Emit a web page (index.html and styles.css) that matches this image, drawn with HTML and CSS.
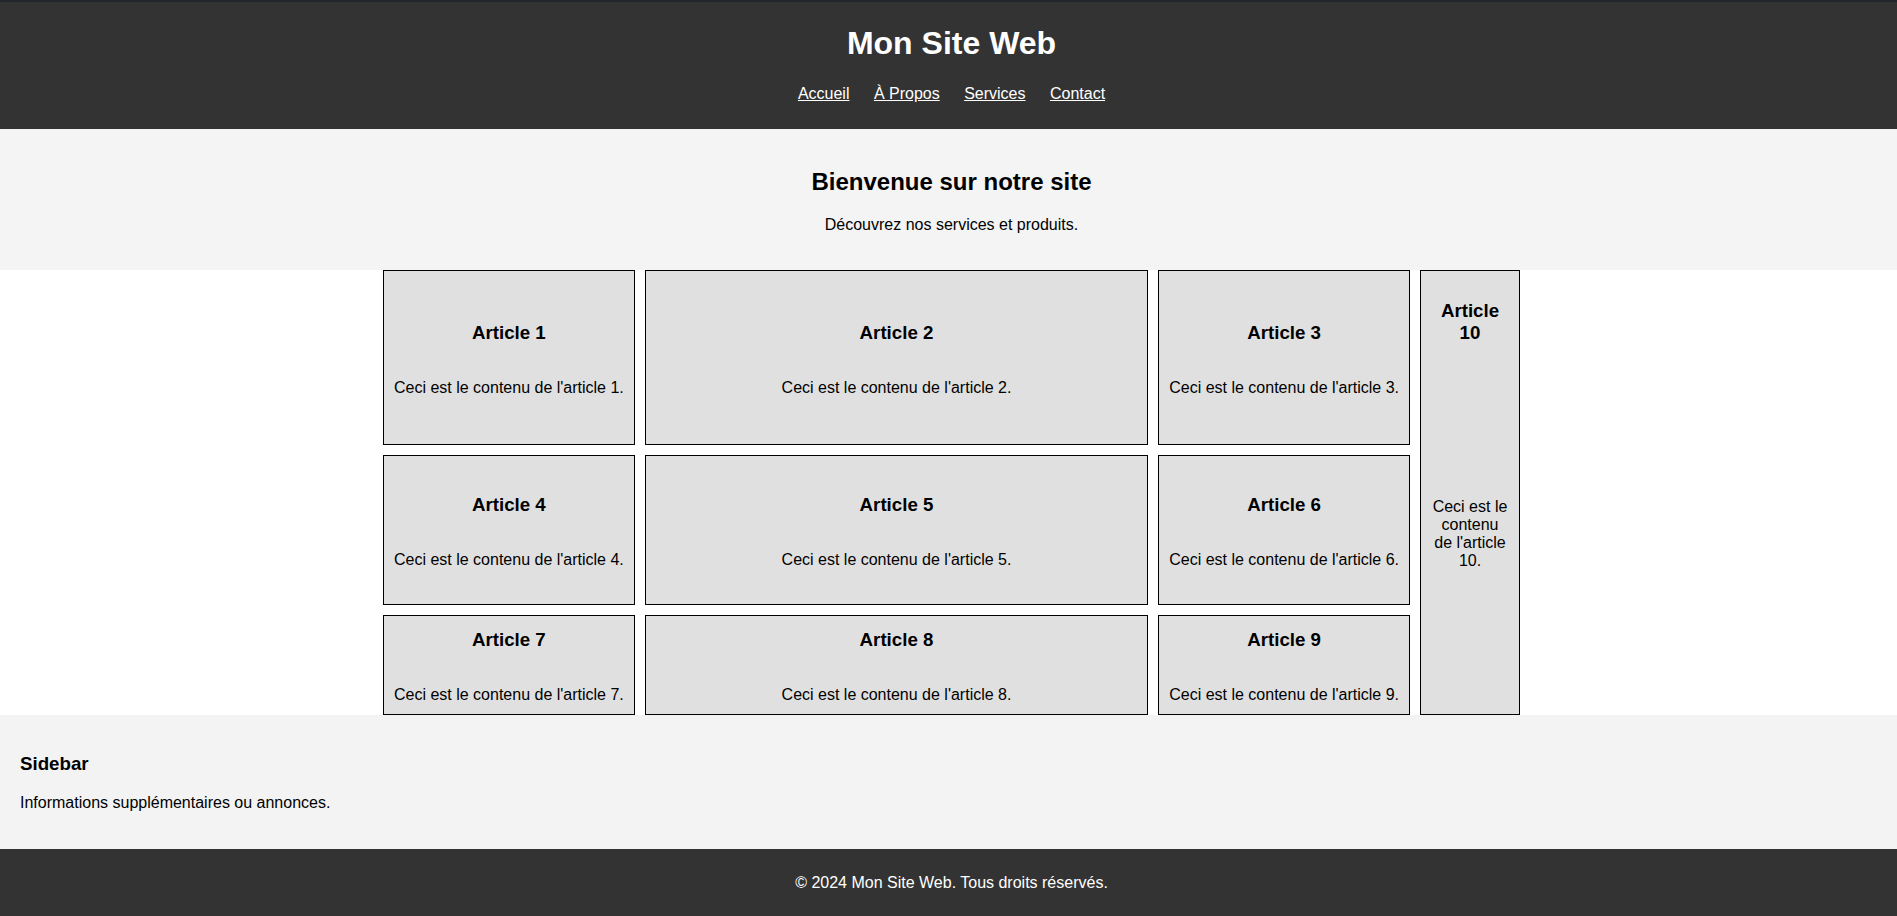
FILE: index.html
```html
<!DOCTYPE html>
<html lang="fr">
<head>
<meta charset="utf-8">
<title>Mon Site Web</title>
<link rel="stylesheet" href="styles.css">
</head>
<body>
<header class="site-header">
  <h1 class="site-title">Mon Site Web</h1>
  <nav>
    <ul class="nav-list">
      <li><a href="#">Accueil</a></li>
      <li><a href="#">À Propos</a></li>
      <li><a href="#">Services</a></li>
      <li><a href="#">Contact</a></li>
    </ul>
  </nav>
</header>
<section class="hero">
  <h2 class="hero-title">Bienvenue sur notre site</h2>
  <p class="hero-text">Découvrez nos services et produits.</p>
</section>
<main class="content">
  <div class="grid">
    <article class="card"><h3>Article 1</h3><p>Ceci est le contenu de l'article 1.</p></article>
    <article class="card"><h3>Article 2</h3><p>Ceci est le contenu de l'article 2.</p></article>
    <article class="card"><h3>Article 3</h3><p>Ceci est le contenu de l'article 3.</p></article>
    <article class="card"><h3>Article 4</h3><p>Ceci est le contenu de l'article 4.</p></article>
    <article class="card"><h3>Article 5</h3><p>Ceci est le contenu de l'article 5.</p></article>
    <article class="card"><h3>Article 6</h3><p>Ceci est le contenu de l'article 6.</p></article>
    <article class="card"><h3>Article 7</h3><p>Ceci est le contenu de l'article 7.</p></article>
    <article class="card"><h3>Article 8</h3><p>Ceci est le contenu de l'article 8.</p></article>
    <article class="card"><h3>Article 9</h3><p>Ceci est le contenu de l'article 9.</p></article>
    <article class="card card-tall"><h3>Article 10</h3><p>Ceci est le contenu de l'article 10.</p></article>
  </div>
</main>
<aside class="sidebar">
  <h3 class="sidebar-title">Sidebar</h3>
  <p class="sidebar-text">Informations supplémentaires ou annonces.</p>
</aside>
<footer class="site-footer">
  <p>© 2024 Mon Site Web. Tous droits réservés.</p>
</footer>
</body>
</html>
```
FILE: styles.css
```css
html, body {
  margin: 0;
  padding: 0;
}

body {
  font-family: "Liberation Sans", Arial, sans-serif;
  font-size: 16px;
  color: #000;
  background: #fff;
}

.site-header {
  background: #333;
  color: #fff;
  border-top: 2px solid #23272b;
  padding: 23px 0 26px 6px;
  text-align: center;
}

.site-title {
  font-size: 32px;
  font-weight: bold;
  margin: 0 0 22.5px;
}

.nav-list {
  list-style: none;
  margin: 0;
  padding: 0;
  display: flex;
  justify-content: center;
  gap: 24.45px;
}

.nav-list a {
  color: #fff;
  text-decoration: underline;
}

.hero {
  background: #f4f4f4;
  padding: 20px 0 20px 6px;
  text-align: center;
}

.hero-title {
  font-size: 24px;
  margin: 19.92px 0;
}

.hero-text {
  margin: 16px 0;
}

.content {
  background: #fff;
}

.grid {
  display: grid;
  grid-template-columns: 1fr 2fr 1fr 100px;
  grid-template-rows: 175px 150px 100px;
  gap: 10px;
  width: 1137px;
  margin-left: 383px;
}

.card {
  box-sizing: border-box;
  background: #e0e0e0;
  border: 1px solid #000;
  padding: 10px 4px;
  text-align: center;
  display: flex;
  flex-direction: column;
  justify-content: center;
  min-height: 0;
}

.card h3 {
  font-size: 18.72px;
  margin: 18.72px 0;
}

.card p {
  margin: 16px 0;
}

.card-tall {
  display: grid;
  padding: 10px;
  grid-column: 4;
  grid-row: 1 / span 3;
}

.sidebar {
  background: #f3f3f3;
  padding: 19px 20px 21px;
}

.sidebar-title {
  font-size: 18.72px;
  margin: 18.72px 0;
}

.sidebar-text {
  margin: 16px 0;
}

.site-footer {
  background: #333;
  color: #fff;
  text-align: center;
  padding: 9px 0 9px 6px;
}

.site-footer p {
  margin: 16px 0;
}
```
